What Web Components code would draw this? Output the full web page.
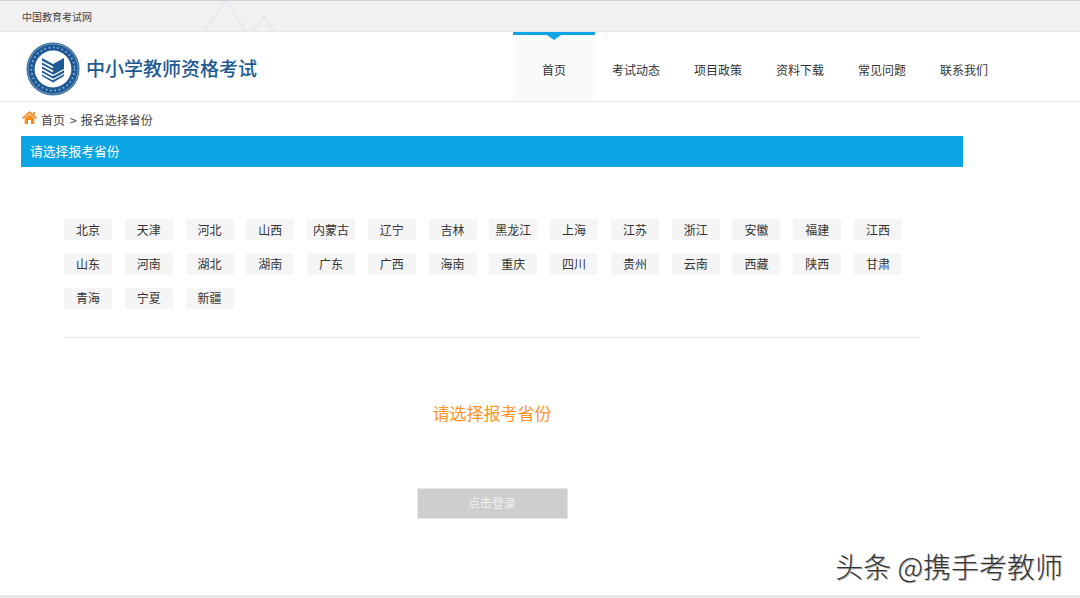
<!DOCTYPE html>
<html lang="zh-CN">
<head>
<meta charset="utf-8">
<title>中小学教师资格考试</title>
<style>
  html, body { margin: 0; padding: 0; background: #fff; }
  body {
    width: 1080px;
    height: 598px;
    overflow: hidden;
    position: relative;
    font-family: "Noto Sans CJK SC", "Liberation Sans", sans-serif;
  }
</style>
</head>
<body>
  <top-bar>中国教育考试网</top-bar>
  <site-header>
    <nav-item active>首页</nav-item>
    <nav-item>考试动态</nav-item>
    <nav-item>项目政策</nav-item>
    <nav-item>资料下载</nav-item>
    <nav-item>常见问题</nav-item>
    <nav-item>联系我们</nav-item>
  </site-header>
  <bread-crumb current="报名选择省份"></bread-crumb>
  <section-title>请选择报考省份</section-title>
  <province-grid>
    <province-chip>北京</province-chip>
    <province-chip>天津</province-chip>
    <province-chip>河北</province-chip>
    <province-chip>山西</province-chip>
    <province-chip>内蒙古</province-chip>
    <province-chip>辽宁</province-chip>
    <province-chip>吉林</province-chip>
    <province-chip>黑龙江</province-chip>
    <province-chip>上海</province-chip>
    <province-chip>江苏</province-chip>
    <province-chip>浙江</province-chip>
    <province-chip>安徽</province-chip>
    <province-chip>福建</province-chip>
    <province-chip>江西</province-chip>
    <province-chip>山东</province-chip>
    <province-chip>河南</province-chip>
    <province-chip>湖北</province-chip>
    <province-chip>湖南</province-chip>
    <province-chip>广东</province-chip>
    <province-chip>广西</province-chip>
    <province-chip>海南</province-chip>
    <province-chip>重庆</province-chip>
    <province-chip>四川</province-chip>
    <province-chip>贵州</province-chip>
    <province-chip>云南</province-chip>
    <province-chip>西藏</province-chip>
    <province-chip>陕西</province-chip>
    <province-chip>甘肃</province-chip>
    <province-chip>青海</province-chip>
    <province-chip>宁夏</province-chip>
    <province-chip>新疆</province-chip>
  </province-grid>
  <login-panel message="请选择报考省份" action="点击登录"></login-panel>
  <water-mark>头条 @携手考教师</water-mark>

<script>
// top strip with the faint mountain lines
class TopBar extends HTMLElement {
  constructor() {
    super();
    const shadow = this.attachShadow({ mode: 'open' });
    shadow.innerHTML = `
      <style>
        :host {
          display: flex;
          align-items: center;
          box-sizing: border-box;
          height: 32px;
          padding: 1px 0 0 22px;
          background: #f1f1f1;
          border-top: 1px solid #cfcfcf;
          border-bottom: 1px solid #e6e6e6;
          color: #444;
          font-size: 10px;
          line-height: 14px;
          position: relative;
          overflow: hidden;
        }
        svg { position: absolute; left: 195px; top: 0; }
      </style>
      <svg width="90" height="32" viewBox="0 0 90 32" fill="none" stroke="#e6e9ef" stroke-width="2">
        <path d="M7 33 L31 -1 L52 33"/>
        <path d="M56 33 L69 15 L81 33"/>
      </svg>
      <slot></slot>
    `;
  }
}
customElements.define('top-bar', TopBar);

class SiteHeader extends HTMLElement {
  constructor() {
    super();
    const shadow = this.attachShadow({ mode: 'open' });
    shadow.innerHTML = `
      <style>
        :host {
          display: flex;
          box-sizing: border-box;
          height: 70px;
          padding-left: 26px;
          border-bottom: 1px solid #e6e6e6;
        }
        .brand {
          display: flex;
          align-items: center;
          gap: 6px;
          width: 487px;
          margin-top: 3px;
        }
        svg { margin-top: 1px; flex: none; }
        h1 {
          margin: 0;
          font-size: 19px;
          line-height: 24px;
          font-weight: 500;
          color: #1d5a93;
          white-space: nowrap;
        }
        nav { display: flex; }
      </style>
      <div class="brand">
        <svg width="54" height="54" viewBox="0 0 54 54">
          <circle cx="27" cy="27" r="26.5" fill="#1f5a96"/>
          <circle cx="27" cy="27" r="25.2" fill="none" stroke="#dbe5f0" stroke-width=".5"/>
          <circle cx="27" cy="27" r="21.6" fill="none" stroke="#9db8d3" stroke-width="1.8" stroke-dasharray="1.4 3"/>
          <circle cx="27" cy="27" r="18.4" fill="#fff"/>
          <path d="M16 16 L27 22 L38 16 V34 L27 40.5 L16 34 Z" fill="#1f5a96"/>
          <path d="M16 19.5 L27 25.5 M16 23.5 L27 29.5 M16 27.5 L27 33.5 M16 31.5 L27 37.5" stroke="#fff" stroke-width="1.6" fill="none"/>
          <path d="M27 33.5 L38 27.5 M27 37.5 L38 31.5" stroke="#fff" stroke-width="1.4" fill="none"/>
        </svg>
        <h1>中小学教师资格考试</h1>
      </div>
      <nav><slot></slot></nav>
    `;
  }
}
customElements.define('site-header', SiteHeader);

class NavItem extends HTMLElement {
  constructor() {
    super();
    const shadow = this.attachShadow({ mode: 'open' });
    shadow.innerHTML = `
      <style>
        :host {
          display: flex;
          align-items: center;
          justify-content: center;
          box-sizing: border-box;
          width: 82px;
          height: 68px;
          padding-top: 8px;
          color: #333;
          font-size: 12px;
          line-height: 16px;
          position: relative;
        }
        :host([active]) {
          background: #fafafa;
          border-top: 3px solid #0ea5e4;
          padding-top: 5px;
        }
        .arrow { display: none; }
        :host([active]) .arrow {
          display: block;
          position: absolute;
          left: 34px;
          top: 0;
          width: 0;
          height: 0;
          border-left: 7px solid transparent;
          border-right: 7px solid transparent;
          border-top: 5px solid #0ea5e4;
        }
      </style>
      <span class="arrow"></span>
      <slot></slot>
    `;
  }
}
customElements.define('nav-item', NavItem);

class BreadCrumb extends HTMLElement {
  constructor() {
    super();
    const current = this.getAttribute('current') || '';
    const shadow = this.attachShadow({ mode: 'open' });
    shadow.innerHTML = `
      <style>
        :host {
          display: flex;
          align-items: center;
          box-sizing: border-box;
          height: 34px;
          padding: 1px 0 0 22px;
          color: #444;
          font-size: 12px;
          line-height: 16px;
        }
        svg { margin-right: 4px; margin-top: -4px; }
        .sep { margin: 0 4px 0 5px; }
      </style>
      <svg width="15" height="13" viewBox="0 0 14 12">
        <path d="M7 0 L14 6.2 L13 7.3 L7 2 L1 7.3 L0 6.2 Z" fill="#ff8a1c"/>
        <path d="M2.5 7 L7 3 L11.5 7 V12 H8.4 V8.4 H5.6 V12 H2.5 Z" fill="#ff8a1c"/>
        <rect x="10.2" y="0.8" width="1.8" height="3" fill="#ff8a1c"/>
      </svg>
      <span>首页</span><span class="sep">&gt;</span><span>${current}</span>
    `;
  }
}
customElements.define('bread-crumb', BreadCrumb);

class SectionTitle extends HTMLElement {
  constructor() {
    super();
    const shadow = this.attachShadow({ mode: 'open' });
    shadow.innerHTML = `
      <style>
        :host {
          display: flex;
          align-items: center;
          box-sizing: border-box;
          width: 942px;
          height: 31px;
          margin-left: 21px;
          padding: 0 0 1px 9px;
          background: #0ca5e3;
          color: #fff;
          font-size: 12.8px;
          line-height: 18px;
        }
      </style>
      <slot></slot>
    `;
  }
}
customElements.define('section-title', SectionTitle);

class ProvinceGrid extends HTMLElement {
  constructor() {
    super();
    const shadow = this.attachShadow({ mode: 'open' });
    shadow.innerHTML = `
      <style>
        :host {
          display: grid;
          grid-template-columns: repeat(14, 48px);
          column-gap: 12.77px;
          row-gap: 13px;
          box-sizing: border-box;
          width: 856px;
          margin: 52px 0 0 64px;
          padding-bottom: 28px;
          border-bottom: 1px solid #e8e8e8;
        }
      </style>
      <slot></slot>
    `;
  }
}
customElements.define('province-grid', ProvinceGrid);

class ProvinceChip extends HTMLElement {
  constructor() {
    super();
    const shadow = this.attachShadow({ mode: 'open' });
    shadow.innerHTML = `
      <style>
        :host {
          display: flex;
          align-items: center;
          justify-content: center;
          height: 21.3px;
          background: #f5f5f5;
          color: #333;
          font-size: 12px;
          line-height: 16px;
          white-space: nowrap;
        }
      </style>
      <slot></slot>
    `;
  }
}
customElements.define('province-chip', ProvinceChip);

class LoginPanel extends HTMLElement {
  constructor() {
    super();
    const message = this.getAttribute('message') || '';
    const action = this.getAttribute('action') || '';
    const shadow = this.attachShadow({ mode: 'open' });
    shadow.innerHTML = `
      <style>
        :host {
          display: flex;
          flex-direction: column;
          align-items: center;
          width: 856px;
          margin-left: 64px;
        }
        .msg {
          margin-top: 63px;
          color: #ff9326;
          font-size: 17px;
          line-height: 24px;
        }
        button {
          box-sizing: border-box;
          width: 151px;
          height: 31px;
          margin-top: 63px;
          padding: 0;
          border: 1px solid #e6e6e6;
          background: #cecece;
          color: #f1f1f1;
          font: inherit;
          font-size: 12px;
          line-height: 16px;
        }
      </style>
      <div class="msg">${message}</div>
      <button type="button">${action}</button>
    `;
  }
}
customElements.define('login-panel', LoginPanel);

// toutiao watermark over the bottom right corner, and the page's closing line
class WaterMark extends HTMLElement {
  constructor() {
    super();
    const shadow = this.attachShadow({ mode: 'open' });
    shadow.innerHTML = `
      <style>
        :host {
          position: absolute;
          right: 17px;
          top: 548px;
          color: #333;
          font-size: 28px;
          line-height: 36px;
          font-weight: 300;
          white-space: nowrap;
          text-shadow: 1px 1px 0 rgba(0,0,0,.3);
        }
        .rule {
          position: fixed;
          left: 0;
          top: 595px;
          width: 1080px;
          height: 3px;
          background: #e8e8e8;
        }
      </style>
      <slot></slot>
      <div class="rule"></div>
    `;
  }
}
customElements.define('water-mark', WaterMark);
</script>
</body>
</html>
